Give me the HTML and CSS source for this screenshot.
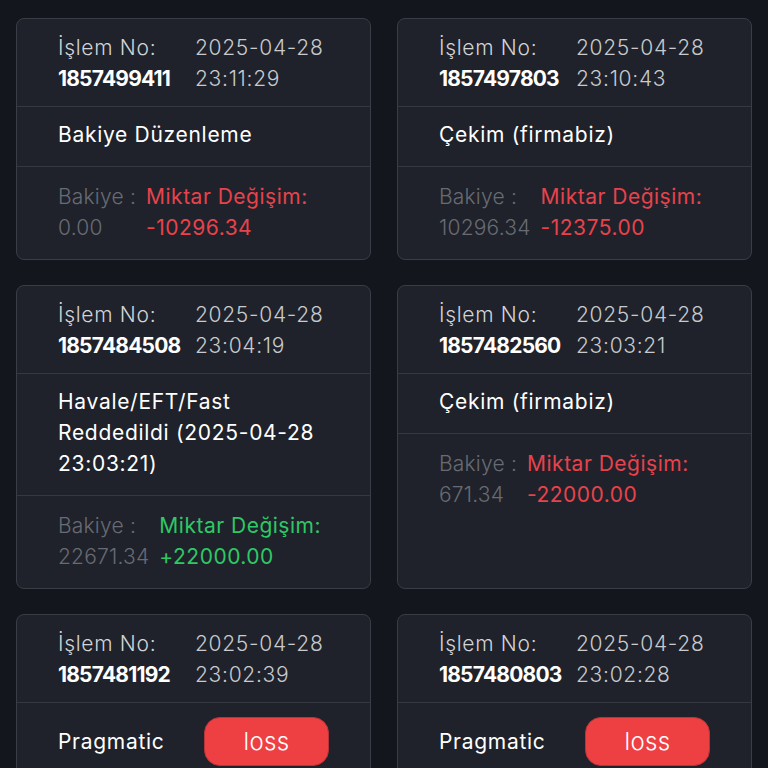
FILE: index.html
```html
<!DOCTYPE html>
<html lang="tr">
<head>
<meta charset="utf-8">
<title>İşlemler</title>
<link rel="stylesheet" href="styles.css">
</head>
<body>
<div class="list">
  <div class="card">
    <div class="sec head">
      <span class="lbl">İşlem No:</span><span class="dt">2025-04-28</span>
      <span class="no">1857499411</span><span class="dt">23:11:29</span>
    </div>
    <div class="sec desc">Bakiye Düzenleme</div>
    <div class="sec bal">
      <span class="muted">Bakiye :</span><span class="neg">Miktar Değişim:</span>
      <span class="muted">0.00</span><span class="neg">-10296.34</span>
    </div>
  </div>
  <div class="card">
    <div class="sec head">
      <span class="lbl">İşlem No:</span><span class="dt">2025-04-28</span>
      <span class="no">1857497803</span><span class="dt">23:10:43</span>
    </div>
    <div class="sec desc">Çekim (firmabiz)</div>
    <div class="sec bal">
      <span class="muted">Bakiye :</span><span class="neg">Miktar Değişim:</span>
      <span class="muted">10296.34</span><span class="neg">-12375.00</span>
    </div>
  </div>
  <div class="card">
    <div class="sec head">
      <span class="lbl">İşlem No:</span><span class="dt">2025-04-28</span>
      <span class="no">1857484508</span><span class="dt">23:04:19</span>
    </div>
    <div class="sec desc">Havale/EFT/Fast Reddedildi (2025-04-28 23:03:21)</div>
    <div class="sec bal">
      <span class="muted">Bakiye :</span><span class="pos">Miktar Değişim:</span>
      <span class="muted">22671.34</span><span class="pos">+22000.00</span>
    </div>
  </div>
  <div class="card">
    <div class="sec head">
      <span class="lbl">İşlem No:</span><span class="dt">2025-04-28</span>
      <span class="no">1857482560</span><span class="dt">23:03:21</span>
    </div>
    <div class="sec desc">Çekim (firmabiz)</div>
    <div class="sec bal">
      <span class="muted">Bakiye :</span><span class="neg">Miktar Değişim:</span>
      <span class="muted">671.34</span><span class="neg">-22000.00</span>
    </div>
  </div>
  <div class="card">
    <div class="sec head">
      <span class="lbl">İşlem No:</span><span class="dt">2025-04-28</span>
      <span class="no">1857481192</span><span class="dt">23:02:39</span>
    </div>
    <div class="sec game">
      <span class="desc-t">Pragmatic</span><span class="badge">loss</span>
    </div>
  </div>
  <div class="card">
    <div class="sec head">
      <span class="lbl">İşlem No:</span><span class="dt">2025-04-28</span>
      <span class="no">1857480803</span><span class="dt">23:02:28</span>
    </div>
    <div class="sec game">
      <span class="desc-t">Pragmatic</span><span class="badge">loss</span>
    </div>
  </div>
</div>
</body>
</html>
```
FILE: styles.css
```css
html, body {
  margin: 0;
  background: #13161d;
}
body {
  font-family: Inter, "Noto Sans", sans-serif;
  font-size: 21px;
  line-height: 31px;
  color: #ffffff;
  letter-spacing: 0.7px;
}
.list {
  display: grid;
  grid-template-columns: 1fr 1fr;
  column-gap: 26px;
  row-gap: 25px;
  padding: 18px 16px;
}
.card {
  display: flex;
  flex-direction: column;
  background: #1f222a;
  border: 1px solid #3a3d46;
  border-radius: 8px;
  overflow: hidden;
}
.sec {
  padding: 14px 41px;
}
.sec + .sec {
  border-top: 1px solid #353841;
}
.head {
  display: grid;
  grid-template-columns: 137px 1fr;
  padding-top: 13px;
  padding-bottom: 12px;
}
.lbl {
  color: #d2d4d8;
  font-weight: 300;
}
.dt {
  color: #c8cace;
  font-weight: 300;
}
.no {
  font-weight: 700;
  color: #ffffff;
  letter-spacing: -0.8px;
}
.desc {
  color: #ffffff;
  font-weight: 400;
  padding-top: 12px;
  padding-bottom: 16px;
}
.bal {
  flex: 1;
  display: grid;
  grid-template-columns: auto 1fr;
  column-gap: 10px;
  align-content: start;
  padding-right: 20px;
  padding-bottom: 16px;
  white-space: nowrap;
}
.muted {
  color: #686b73;
  font-weight: 300;
  letter-spacing: 0.2px;
}
.neg {
  color: #e8424c;
  font-weight: 400;
  letter-spacing: 0.5px;
}
.pos {
  color: #2ec866;
  font-weight: 400;
  letter-spacing: 0.5px;
}
.game {
  display: grid;
  grid-template-columns: 146px 125px;
  align-items: center;
  padding-top: 14px;
  padding-bottom: 16px;
}
.desc-t {
  color: #ffffff;
}
.badge {
  height: 49px;
  border-radius: 16px;
  background: #ee4043;
  border: 1px solid #b7353a;
  box-sizing: border-box;
  color: #ffffff;
  font-size: 24px;
  font-weight: 300;
  letter-spacing: 0.3px;
  display: flex;
  align-items: center;
  justify-content: center;
}
```
